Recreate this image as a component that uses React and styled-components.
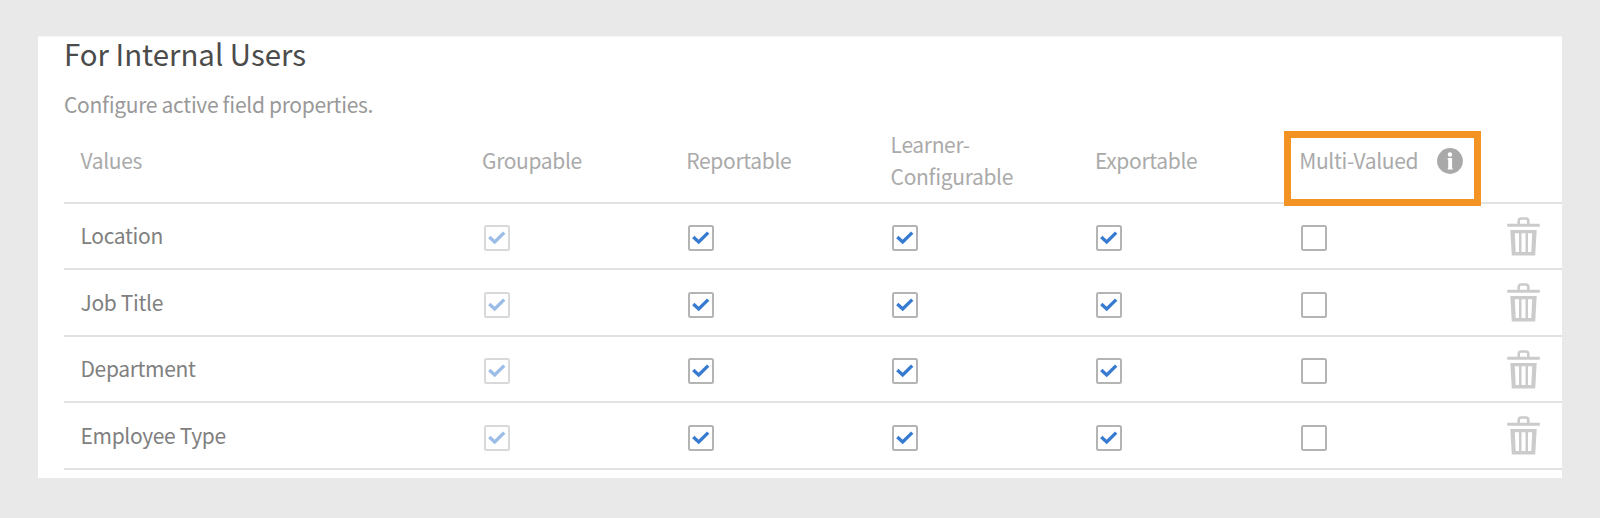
import React from "react";
import styled, { createGlobalStyle } from "styled-components";

const GlobalStyle = createGlobalStyle`
  * { box-sizing: border-box; }
  body {
    margin: 0;
    background: #e9e9e9;
    font-family: "Noto Sans CJK SC", "Open Sans", sans-serif;
  }
`;

const Page = styled.div`
  height: 518px;
  padding: 36px 38px 40px;
`;

const Panel = styled.main`
  height: 442px;
  padding-left: 26px;
  background: #fff;
  border-top: 1px solid #f6f6f6;
`;

const Title = styled.h1`
  margin: 0;
  height: 50px;
  font-size: 29.4px;
  line-height: 32px;
  font-weight: 400;
  color: #4b4b4b;
`;

const Subtitle = styled.p`
  margin: 0;
  height: 40px;
  padding-top: 1px;
  font-size: 21px;
  line-height: 32px;
  letter-spacing: -0.31px;
  font-feature-settings: "liga" 1;
  color: #999;
`;

const Grid = styled.div`
  display: grid;
  grid-template-columns: 418px 204.3px 204.3px 204.3px 204.3px 207.8px 1fr;
  align-items: center;
  border-bottom: 2px solid #e2e2e2;
  font-size: 21px;
  line-height: 32px;
  letter-spacing: -0.34px;
  font-feature-settings: "liga" 1;
`;

const HeaderRow = styled(Grid)`
  height: 77px;
  padding-bottom: 9px;
  color: #aaa;
`;

const Row = styled(Grid)`
  height: ${(p) => p.$height}px;
  color: #808080;
`;

const NameCell = styled.div`
  padding: 0 0 ${(p) => (p.$header ? 0 : 2)}px 16.5px;
`;

const HeaderCell = styled.div`
  position: relative;
`;

const CheckCell = styled.div`
  display: flex;
  padding: 4px 0 0 1.6px;
`;

const Checkbox = styled.span`
  display: flex;
  width: 26px;
  height: 26px;
  border: 2px solid #b4b4b4;
  border-radius: 2.5px;
  opacity: ${(p) => (p.$disabled ? 0.5 : 1)};
`;

const MultiValued = styled(HeaderCell)`
  display: flex;
  align-items: center;
  gap: 19px;

  > svg {
    margin-top: 2px;
  }
`;

const Highlight = styled.div`
  position: absolute;
  left: -15.2px;
  top: -13px;
  width: 197px;
  height: 75px;
  border: 7px solid #f39323;
`;

const Check = () => (
  <svg width="22" height="22" viewBox="0 0 22 22" fill="none">
    <path d="M3.3 10L8.7 15L18.2 5.6" stroke="#377bd1" strokeWidth="3.3" />
  </svg>
);

const InfoIcon = () => (
  <svg width="26" height="26" viewBox="0 0 26 26">
    <circle cx="13" cy="13" r="12.9" fill="#a9a9a9" />
    <circle cx="13" cy="6.5" r="2.2" fill="#fff" />
    <path d="M10.7 10.1H15.1V20H15.6V21.6H10.8V20H11.2V11.5H10.7Z" fill="#fff" />
  </svg>
);

const TrashIcon = () => (
  <svg width="33" height="39" viewBox="0 0 33 39" fill="none" stroke="#cbcbcb">
    <path d="M11.7 7V4Q11.7 1.5 14.2 1.5H18.8Q21.3 1.5 21.3 4V7" strokeWidth="2.6" />
    <path d="M.2 8.2H32.8" strokeWidth="3" />
    <path
      d="M3.3 13H29.7L28.2 38.6H4.8Z M7.8 16.2L8.7 35H12V16.2Z M14.5 16.2V35H18.5V16.2Z M21 16.2V35H24.3L25.2 16.2Z"
      fill="#cbcbcb"
      fillRule="evenodd"
      stroke="none"
    />
  </svg>
);

const TrashCell = styled.div`
  display: flex;
`;

const rows = [
  { name: "Location", height: 66 },
  { name: "Job Title", height: 67 },
  { name: "Department", height: 66 },
  { name: "Employee Type", height: 67 },
];

export default function App() {
  return (
    <Page>
      <GlobalStyle />
      <Panel>
        <Title>For Internal Users</Title>
        <Subtitle>Configure active field properties.</Subtitle>
        <HeaderRow>
          <NameCell $header>Values</NameCell>
          <HeaderCell>Groupable</HeaderCell>
          <HeaderCell>Reportable</HeaderCell>
          <HeaderCell>
            Learner-
            <br />
            Configurable
          </HeaderCell>
          <HeaderCell>Exportable</HeaderCell>
          <MultiValued>
            Multi-Valued
            <InfoIcon />
            <Highlight />
          </MultiValued>
        </HeaderRow>
        {rows.map((row) => (
          <Row key={row.name} $height={row.height}>
            <NameCell>{row.name}</NameCell>
            <CheckCell><Checkbox $disabled><Check /></Checkbox></CheckCell>
            <CheckCell><Checkbox><Check /></Checkbox></CheckCell>
            <CheckCell><Checkbox><Check /></Checkbox></CheckCell>
            <CheckCell><Checkbox><Check /></Checkbox></CheckCell>
            <CheckCell><Checkbox /></CheckCell>
            <TrashCell><TrashIcon /></TrashCell>
          </Row>
        ))}
      </Panel>
    </Page>
  );
}
